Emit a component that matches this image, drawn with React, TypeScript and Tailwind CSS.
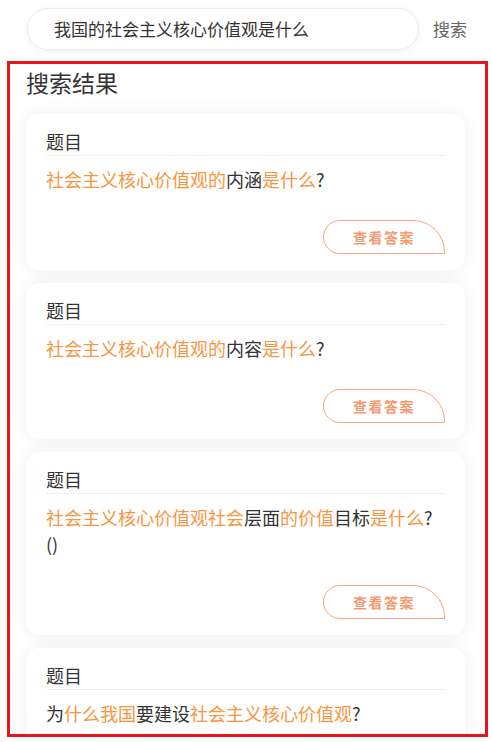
const font = { fontFamily: '"Noto Sans CJK SC", "Noto Sans", sans-serif' };

type Seg = { t: string; hl?: boolean; br?: boolean };
type Question = { id: number; parts: Seg[] };

const questions: Question[] = [
  { id: 1, parts: [{ t: '社会主义核心价值观的', hl: true }, { t: '内涵' }, { t: '是什么', hl: true }, { t: '?' }] },
  { id: 2, parts: [{ t: '社会主义核心价值观的', hl: true }, { t: '内容' }, { t: '是什么', hl: true }, { t: '?' }] },
  {
    id: 3,
    parts: [
      { t: '社会主义核心价值观社会', hl: true },
      { t: '层面' },
      { t: '的价值', hl: true },
      { t: '目标' },
      { t: '是什么', hl: true },
      { t: '?' },
      { t: '()', br: true },
    ],
  },
  {
    id: 4,
    parts: [{ t: '为' }, { t: '什么我国', hl: true }, { t: '要建设' }, { t: '社会主义核心价值观', hl: true }, { t: '?' }],
  },
];

function QuestionCard({ q }: { q: Question }) {
  return (
    <div className="rounded-[14px] bg-white px-5 pb-4 pt-[14px] shadow-[0_0_18px_rgba(0,0,0,0.07)]">
      <div className="border-b border-[#f0f0f0] pb-[1px] text-[18px] leading-[26px] text-[#333]">题目</div>
      <p className="mt-[10px] break-all text-[18px] leading-[27px] text-[#333]">
        {q.parts.map((s, i) => (
          <span key={i} className={s.hl ? 'text-[#f7963f]' : ''}>
            {s.br && <br />}
            {s.t}
          </span>
        ))}
      </p>
      <div className="mt-[27px] flex justify-end">
        <button className="h-[34px] w-[122px] rounded-l-[17px] rounded-tr-[32px] border border-[#f8a57f] text-[14px] font-bold tracking-[1.5px] text-[#f59a72]">
          查看答案
        </button>
      </div>
    </div>
  );
}

export default function App() {
  return (
    <div className="min-h-[742px] bg-white" style={font}>
      <div className="flex items-center pl-[27px] pt-[8px]">
        <div className="flex h-[42px] w-[392px] items-center rounded-full border border-[#ececec] bg-white pl-[26px] text-[17px] text-[#333] shadow-[0_2px_8px_rgba(0,0,0,0.05)]">
          我国的社会主义核心价值观是什么
        </div>
        <span className="ml-[14px] text-[17px] text-[#666]">搜索</span>
      </div>

      <div className="ml-[7px] mt-[11px] h-[676px] w-[481px] overflow-hidden border-[3px] border-[#e8141c] pl-4 pr-5">
        <h2 className="mt-[3px] text-[23px] leading-[30px] text-[#333]">搜索结果</h2>
        <div className="mt-[17px] flex flex-col gap-[13px]">
          {questions.map((q) => (
            <QuestionCard key={q.id} q={q} />
          ))}
        </div>
      </div>
    </div>
  );
}
